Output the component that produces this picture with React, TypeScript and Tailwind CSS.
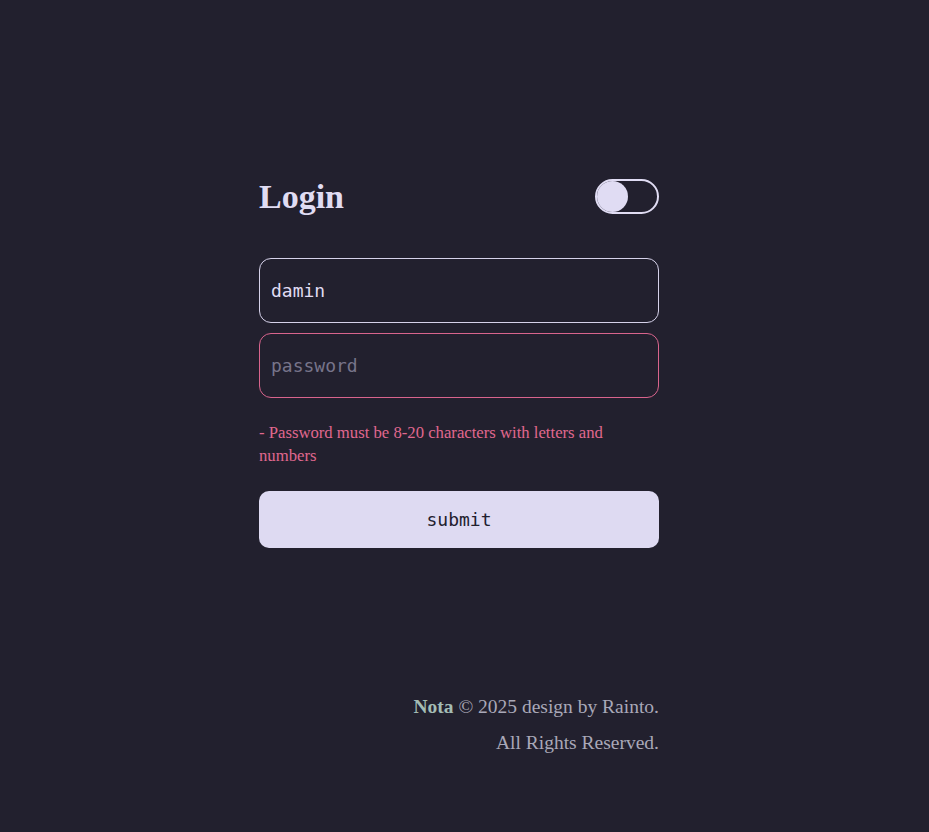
import React from "react";

export default function App() {
  const serif = { fontFamily: '"Liberation Serif", "Times New Roman", serif' };
  return (
    <div className="min-h-[832px] w-full bg-[#22202e] flex justify-center pr-[11px]" style={serif}>
      <div className="w-[400px] pt-[179px] flex flex-col">
        <div className="flex items-center justify-between h-[35px]">
          <h1 className="text-[34px] font-bold text-[#e0dcf3] leading-none">Login</h1>
          <div className="w-[64px] h-[35px] rounded-full border-2 border-[#e0dcf3] flex items-center">
            <div className="w-[31px] h-[31px] rounded-full bg-[#e0dcf3]" />
          </div>
        </div>
        <div className="mt-[44px] flex flex-col gap-[10px]">
          <input
            className="h-[65px] rounded-[12px] border border-[#d6d2ea] bg-transparent px-[11px] text-[18px] text-[#e0dcf3] outline-none font-['DejaVu_Sans_Mono',monospace]"
            defaultValue="damin"
          />
          <input
            className="h-[65px] rounded-[12px] border border-[#d9648d] bg-transparent px-[11px] text-[18px] text-[#e0dcf3] placeholder:text-[#77748a] outline-none font-['DejaVu_Sans_Mono',monospace]"
            placeholder="password"
          />
        </div>
        <p className="mt-[23px] text-[16.7px] leading-[23px] text-[#e0688f]">
          - Password must be 8-20 characters with letters and numbers
        </p>
        <button className="mt-[24px] h-[57px] rounded-[10px] bg-[#dedaf2] text-[18px] text-[#22202e] font-['DejaVu_Sans_Mono',monospace]">
          submit
        </button>
        <div className="mt-[141px] text-right text-[19.5px] leading-[36px] text-[#a9a8b8]">
          <div>
            <span className="font-bold text-[#a3bcb4]">Nota</span> © 2025 design by Rainto.
          </div>
          <div>All Rights Reserved.</div>
        </div>
      </div>
    </div>
  );
}
